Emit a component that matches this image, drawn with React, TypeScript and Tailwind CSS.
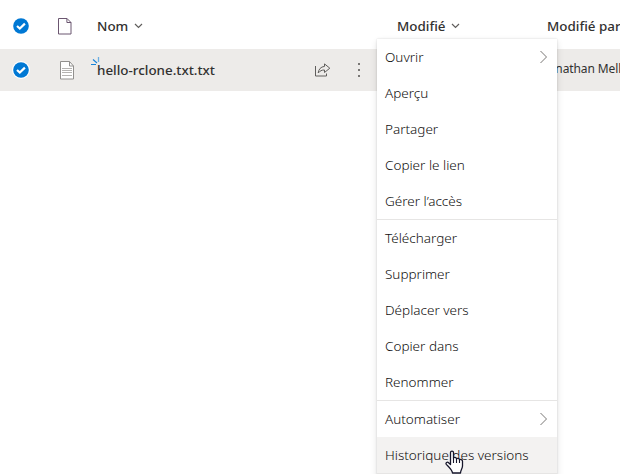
import React from 'react';

function CheckBadge({ ring = false }: { ring?: boolean }) {
  return (
    <svg width="18" height="18" viewBox="0 0 18 18" className="block shrink-0">
      {ring && <circle cx="9" cy="9" r="9" fill="#fff" />}
      <circle cx="9" cy="9" r="7.8" fill="#0078d4" />
      <path d="M5 9 7.8 11.5 12.9 6.6" fill="none" stroke="#fff" strokeWidth="2.200" />
    </svg>
  );
}

function BlankFile() {
  return (
    <svg width="14" height="17" viewBox="0 0 14 17" className="block shrink-0">
      <path d="M.5.5h8.5l4 4v11.5H.5Z" fill="#fff" stroke="#6b5670" />
      <path d="M8.9.5v4h4.1" fill="none" stroke="#6b5670" />
    </svg>
  );
}

function TextFile() {
  return (
    <svg width="15" height="19" viewBox="0 0 15 19" className="block shrink-0">
      <path d="M.5.5h9l4 4.5v13H.5Z" fill="#fff" stroke="#92908e" />
      <path d="M9.500.5V5H13.500" fill="none" stroke="#92908e" />
      <path d="M2 7.500h10M2 9.500h10M2 11.500h10M2 14.500h10" stroke="#b5b3b1" />
    </svg>
  );
}

function ChevronDown() {
  return (
    <svg width="9" height="6" viewBox="0 0 9 6" className="block shrink-0">
      <path d="M1 1 4.500 4.500 8 1" fill="none" stroke="#605e5c" strokeWidth="1.200" />
    </svg>
  );
}

function ShareIcon() {
  return (
    <svg width="16" height="14" viewBox="0 0 16 14" className="block shrink-0">
      <path d="M.5 3v10h11v-2.500" fill="none" stroke="#605e5c" />
      <path d="M9.500.9 14.800 5.200 9.500 9.500V7C6.800 6.900 5 7.900 3.200 10 3.600 6.400 5.700 3.700 9.500 3.400Z" fill="none" stroke="#605e5c" strokeLinejoin="round" />
    </svg>
  );
}

type Item = { label: string; arrow?: boolean; hover?: boolean };

const groups: Item[][] = [
  [
    { label: 'Ouvrir', arrow: true },
    { label: 'Aperçu' },
    { label: 'Partager' },
    { label: 'Copier le lien' },
    { label: 'Gérer l’accès' },
  ],
  [
    { label: 'Télécharger' },
    { label: 'Supprimer' },
    { label: 'Déplacer vers' },
    { label: 'Copier dans' },
    { label: 'Renommer' },
  ],
  [
    { label: 'Automatiser', arrow: true },
    { label: 'Historique des versions', hover: true },
  ],
];

function MenuRow({ label, arrow, hover }: Item) {
  return (
    <div className={`flex h-9 items-center justify-between pr-[9px] pl-2 ${hover ? 'bg-[#f3f2f1]' : ''}`}>
      <span className="text-[13.5px] leading-5 font-[350] whitespace-nowrap">{label}</span>
      {arrow && (
        <svg width="9" height="14" viewBox="0 0 9 14" className="block shrink-0">
          <path d="M1.500 1 7.500 7 1.500 13" fill="none" stroke="#797775" />
        </svg>
      )}
    </div>
  );
}

function ContextMenu() {
  return (
    <div className="absolute top-[39px] left-[377px] w-[180px] divide-y divide-[#e6e5e4] bg-white text-[#11100f] shadow-[0_3px_7px_rgba(0,0,0,0.12),0_0_2px_rgba(0,0,0,0.14)]">
      {groups.map((items, i) => (
        <div key={i}>
          {items.map((item) => (
            <MenuRow key={item.label} {...item} />
          ))}
        </div>
      ))}
      <div className="h-9" />
    </div>
  );
}

function HandCursor() {
  return (
    <svg width="19" height="24" viewBox="0 0 19 24" className="absolute top-[450px] left-[445px]">
      <path
        d="M5.500 14.500V2.600C5.500.5 8.500.5 8.500 2.600V8.200C8.800 6.900 11.500 7.200 11.500 8.900 12 7.900 14.500 8.200 14.500 10 15.200 9 17.500 9.500 17.500 11.300V16C17.500 18.500 15.500 20 15.500 23H7.500C7.200 20 4 17.200 1.300 14.400.3 12.800 2.300 11.500 3.600 12.700Z"
        fill="#fff"
        stroke="#16162b"
        strokeWidth="1.300"
        strokeLinejoin="round"
      />
      <path d="M8.500 8v5M11.500 9v4M14.500 10v3" stroke="#16162b" strokeWidth="1.100" />
    </svg>
  );
}

export default function App() {
  return (
    <div className="relative h-[474px] w-[620px] overflow-hidden bg-white font-['Noto_Sans','Open_Sans',sans-serif] text-[#323130]">
      <div className="flex h-[49px] items-center pt-[3px] pl-3 text-[13.4px] font-[550]">
        <CheckBadge />
        <div className="ml-7 flex w-[39px] shrink-0">
          <BlankFile />
        </div>
        <div className="flex w-[300px] shrink-0 items-center gap-[6px]">
          <span className="pt-px">Nom</span>
          <ChevronDown />
        </div>
        <div className="flex w-[150px] shrink-0 items-center gap-[6px]">
          <span className="pt-px">Modifié</span>
          <ChevronDown />
        </div>
        <span className="pt-px whitespace-nowrap">Modifié par</span>
      </div>
      <div className="flex h-[42px] items-center bg-[#edebe9] pl-3">
        <CheckBadge ring />
        <div className="ml-[30px] flex w-[31px] shrink-0">
          <TextFile />
        </div>
        <div className="flex w-[224px] shrink-0 items-center">
          <svg width="9" height="9" viewBox="0 0 9 9" className="mb-[17px] block shrink-0">
            <path d="M0 7.500H5M2 2.500 6 6" stroke="#1683d8" strokeWidth="1.100" />
            <path d="M7.500 0v5" stroke="#6caee2" strokeWidth="1.300" />
          </svg>
          <span className="-ml-[3px] pt-px text-[13.4px] font-[550]">hello-rclone.txt.txt</span>
        </div>
        <ShareIcon />
        <div className="ml-[27px] flex w-[187px] shrink-0 flex-col gap-1">
          <span className="size-[2px] bg-[#797775]" />
          <span className="size-[2px] bg-[#797775]" />
          <span className="size-[2px] bg-[#797775]" />
        </div>
        <span className="-mt-[2px] text-xs tracking-[-0.1px] whitespace-nowrap">Jonathan Mell</span>
      </div>
      <ContextMenu />
      <HandCursor />
    </div>
  );
}
